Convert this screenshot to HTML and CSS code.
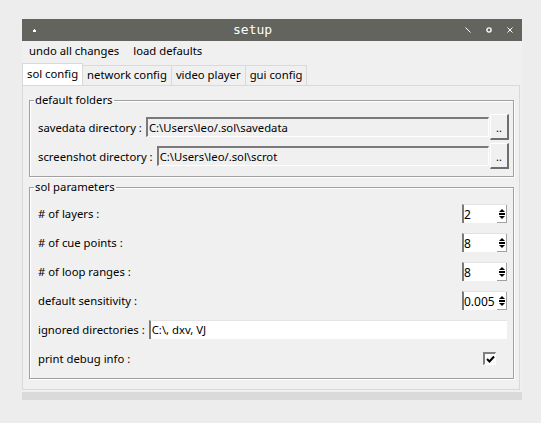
FILE: index.html
```html
<!DOCTYPE html>
<html>
<head>
<meta charset="utf-8">
<link rel="stylesheet" href="styles.css">
</head>
<body>
<div class="window">
  <div class="titlebar">
    <svg class="tb-icon" width="5" height="4" viewBox="0 0 5 4"><path d="M2 1h1v1h1v2H1V2h1z" fill="#fff"/></svg>
    <span class="title">setup</span>
    <div class="controls">
      <svg width="6" height="6" viewBox="0 0 6 6"><path d="M0.5 0.5L5.5 5.5" stroke="#fff" stroke-width="1"/></svg>
      <svg width="6" height="6" viewBox="0 0 6 6"><circle cx="3" cy="3" r="2.1" stroke="#fff" stroke-width="1.4" fill="none"/></svg>
      <svg width="6" height="6" viewBox="0 0 6 6"><path d="M0.5 0.5L5.5 5.5M5.5 0.5L0.5 5.5" stroke="#fff" stroke-width="1"/></svg>
    </div>
  </div>
  <div class="menubar">
    <span>undo all changes</span>
    <span>load defaults</span>
  </div>
  <div class="tabs">
    <div class="tab active">sol config</div>
    <div class="tab">network config</div>
    <div class="tab">video player</div>
    <div class="tab">gui config</div>
  </div>
  <div class="pane">
    <fieldset class="group folders">
      <legend>default folders</legend>
      <div class="frow">
        <span class="lbl">savedata directory :</span>
        <div class="path">C:\Users\leo/.sol\savedata</div>
        <div class="browse">..</div>
      </div>
      <div class="frow">
        <span class="lbl">screenshot directory :</span>
        <div class="path">C:\Users\leo/.sol\scrot</div>
        <div class="browse">..</div>
      </div>
    </fieldset>
    <fieldset class="group params">
      <legend>sol parameters</legend>
      <div class="prow">
        <span class="lbl"># of layers :</span>
        <div class="spin"><span class="val">2</span>
          <svg class="arrows" width="10" height="18" viewBox="0 0 10 18"><path d="M2 7h6L5 4z" fill="#000"/><path d="M2 8.5h6M2 9.5h6" stroke="#000" stroke-width="1"/><path d="M2 11h6L5 14z" fill="#000"/><path d="M9.5 0v18M0 17.5h10" stroke="#a0a0a0"/></svg>
        </div>
      </div>
      <div class="prow">
        <span class="lbl"># of cue points :</span>
        <div class="spin"><span class="val">8</span>
          <svg class="arrows" width="10" height="18" viewBox="0 0 10 18"><path d="M2 7h6L5 4z" fill="#000"/><path d="M2 8.5h6M2 9.5h6" stroke="#000" stroke-width="1"/><path d="M2 11h6L5 14z" fill="#000"/><path d="M9.5 0v18M0 17.5h10" stroke="#a0a0a0"/></svg>
        </div>
      </div>
      <div class="prow">
        <span class="lbl"># of loop ranges :</span>
        <div class="spin"><span class="val">8</span>
          <svg class="arrows" width="10" height="18" viewBox="0 0 10 18"><path d="M2 7h6L5 4z" fill="#000"/><path d="M2 8.5h6M2 9.5h6" stroke="#000" stroke-width="1"/><path d="M2 11h6L5 14z" fill="#000"/><path d="M9.5 0v18M0 17.5h10" stroke="#a0a0a0"/></svg>
        </div>
      </div>
      <div class="prow">
        <span class="lbl">default sensitivity :</span>
        <div class="spin"><span class="val">0.005</span>
          <svg class="arrows" width="10" height="18" viewBox="0 0 10 18"><path d="M2 7h6L5 4z" fill="#000"/><path d="M2 8.5h6M2 9.5h6" stroke="#000" stroke-width="1"/><path d="M2 11h6L5 14z" fill="#000"/><path d="M9.5 0v18M0 17.5h10" stroke="#a0a0a0"/></svg>
        </div>
      </div>
      <div class="prow">
        <span class="lbl">ignored directories :</span>
        <div class="text">C:\, dxv, VJ</div>
      </div>
      <div class="prow">
        <span class="lbl">print debug info :</span>
        <div class="check"><svg width="9" height="9" viewBox="0 0 9 9"><path d="M1 4l2.5 2.5L8 1.5" stroke="#000" stroke-width="2" fill="none"/></svg></div>
      </div>
    </fieldset>
  </div>
  <div class="strip"></div>
</div>
</body>
</html>
```

FILE: styles.css
```css
body {
  margin: 0;
  background: #ededed;
  font-family: "Noto Sans", sans-serif;
  font-size: 11.3px;
  color: #000;
}

.window {
  margin: 19px 0 0 22px;
  width: 500px;
  background: #f0f0f0;
}

.titlebar {
  height: 22px;
  background: #64645f;
  display: flex;
  align-items: center;
  padding: 0 9px 0 10px;
  color: #fff;
}

.tb-icon {
  display: block;
}

.title {
  font-family: "DejaVu Sans Mono", monospace;
  font-size: 13px;
  line-height: 22px;
  margin-left: 196px;
}

.controls {
  margin-left: auto;
  display: flex;
  gap: 15px;
  align-items: center;
}

.controls svg {
  display: block;
}

.menubar {
  box-sizing: border-box;
  height: 22px;
  display: flex;
  align-items: center;
  gap: 14px;
  padding: 0 0 3px 7px;
}

.tabs {
  height: 22px;
  display: flex;
  align-items: flex-end;
  padding-left: 1px;
}

.tab {
  box-sizing: border-box;
  height: 20px;
  line-height: 18px;
  padding: 0 4px;
  border: 1px solid #d9d9d9;
  border-bottom: none;
  margin-left: -1px;
}

.tab.active {
  height: 22px;
  line-height: 20px;
  background: #fff;
  position: relative;
}

.pane {
  box-sizing: border-box;
  height: 305px;
  border: 1px solid #d9d9d9;
  margin-right: 2px;
  padding: 6px 5px 0 6px;
}

.group {
  margin: 0;
  min-width: 0;
  border: 1px solid #a0a0a0;
  box-shadow: inset 1px 1px 0 #fff, 1px 1px 0 #fff;
  padding: 0 4px 7px 8px;
}

.group legend {
  padding: 0 1px;
  margin-left: -4px;
  line-height: 16px;
}

.folders {
  display: flex;
  flex-direction: column;
  gap: 3px;
  padding-top: 6px;
}

.params {
  margin-top: 2px;
  display: flex;
  flex-direction: column;
  gap: 10px;
  padding: 9px 6px 10px 8px;
}

.frow {
  display: flex;
  align-items: center;
  height: 26px;
}

.lbl {
  margin-right: 4px;
  white-space: nowrap;
}

.path {
  flex: 1;
  box-sizing: border-box;
  height: 20px;
  line-height: 17px;
  padding-left: 1px;
  background: #f0f0f0;
  border-top: 2px solid #7a7a7a;
  border-left: 2px solid #7a7a7a;
  border-right: 1px solid #fff;
  border-bottom: 1px solid #fff;
  white-space: nowrap;
  overflow: hidden;
}

.browse {
  box-sizing: border-box;
  width: 19px;
  height: 26px;
  margin-left: 1px;
  border-top: 1px solid #fff;
  border-left: 1px solid #fff;
  border-right: 2px solid #6e6e6e;
  border-bottom: 2px solid #6e6e6e;
  background: #f0f0f0;
  text-align: center;
  line-height: 26px;
  font-size: 11px;
}

.prow {
  display: flex;
  align-items: center;
  height: 19px;
}

.spin {
  margin-left: auto;
  box-sizing: border-box;
  width: 45px;
  height: 19px;
  background: #fff;
  border-left: 2px solid #7a7a7a;
  border-top: 1px solid #e3e3e3;
  display: flex;
  align-items: center;
}

.val {
  flex: 1;
  font-size: 12px;
  line-height: 17px;
  white-space: nowrap;
  overflow: hidden;
}

.arrows {
  display: block;
  flex: none;
}

.text {
  flex: 1;
  box-sizing: border-box;
  height: 19px;
  line-height: 17px;
  background: #fff;
  border-left: 2px solid #7a7a7a;
  border-top: 1px solid #e3e3e3;
  padding-left: 1px;
  white-space: nowrap;
}

.check {
  margin-left: auto;
  margin-right: 11px;
  box-sizing: border-box;
  width: 13px;
  height: 13px;
  background: #fafafa;
  border-top: 2px solid #808080;
  border-left: 2px solid #808080;
  border-right: 1px solid #fff;
  border-bottom: 1px solid #fff;
  display: flex;
  align-items: center;
  justify-content: center;
}

.check svg {
  display: block;
}

.strip {
  height: 8px;
  margin-top: 2px;
  background: #dadada;
}
```
